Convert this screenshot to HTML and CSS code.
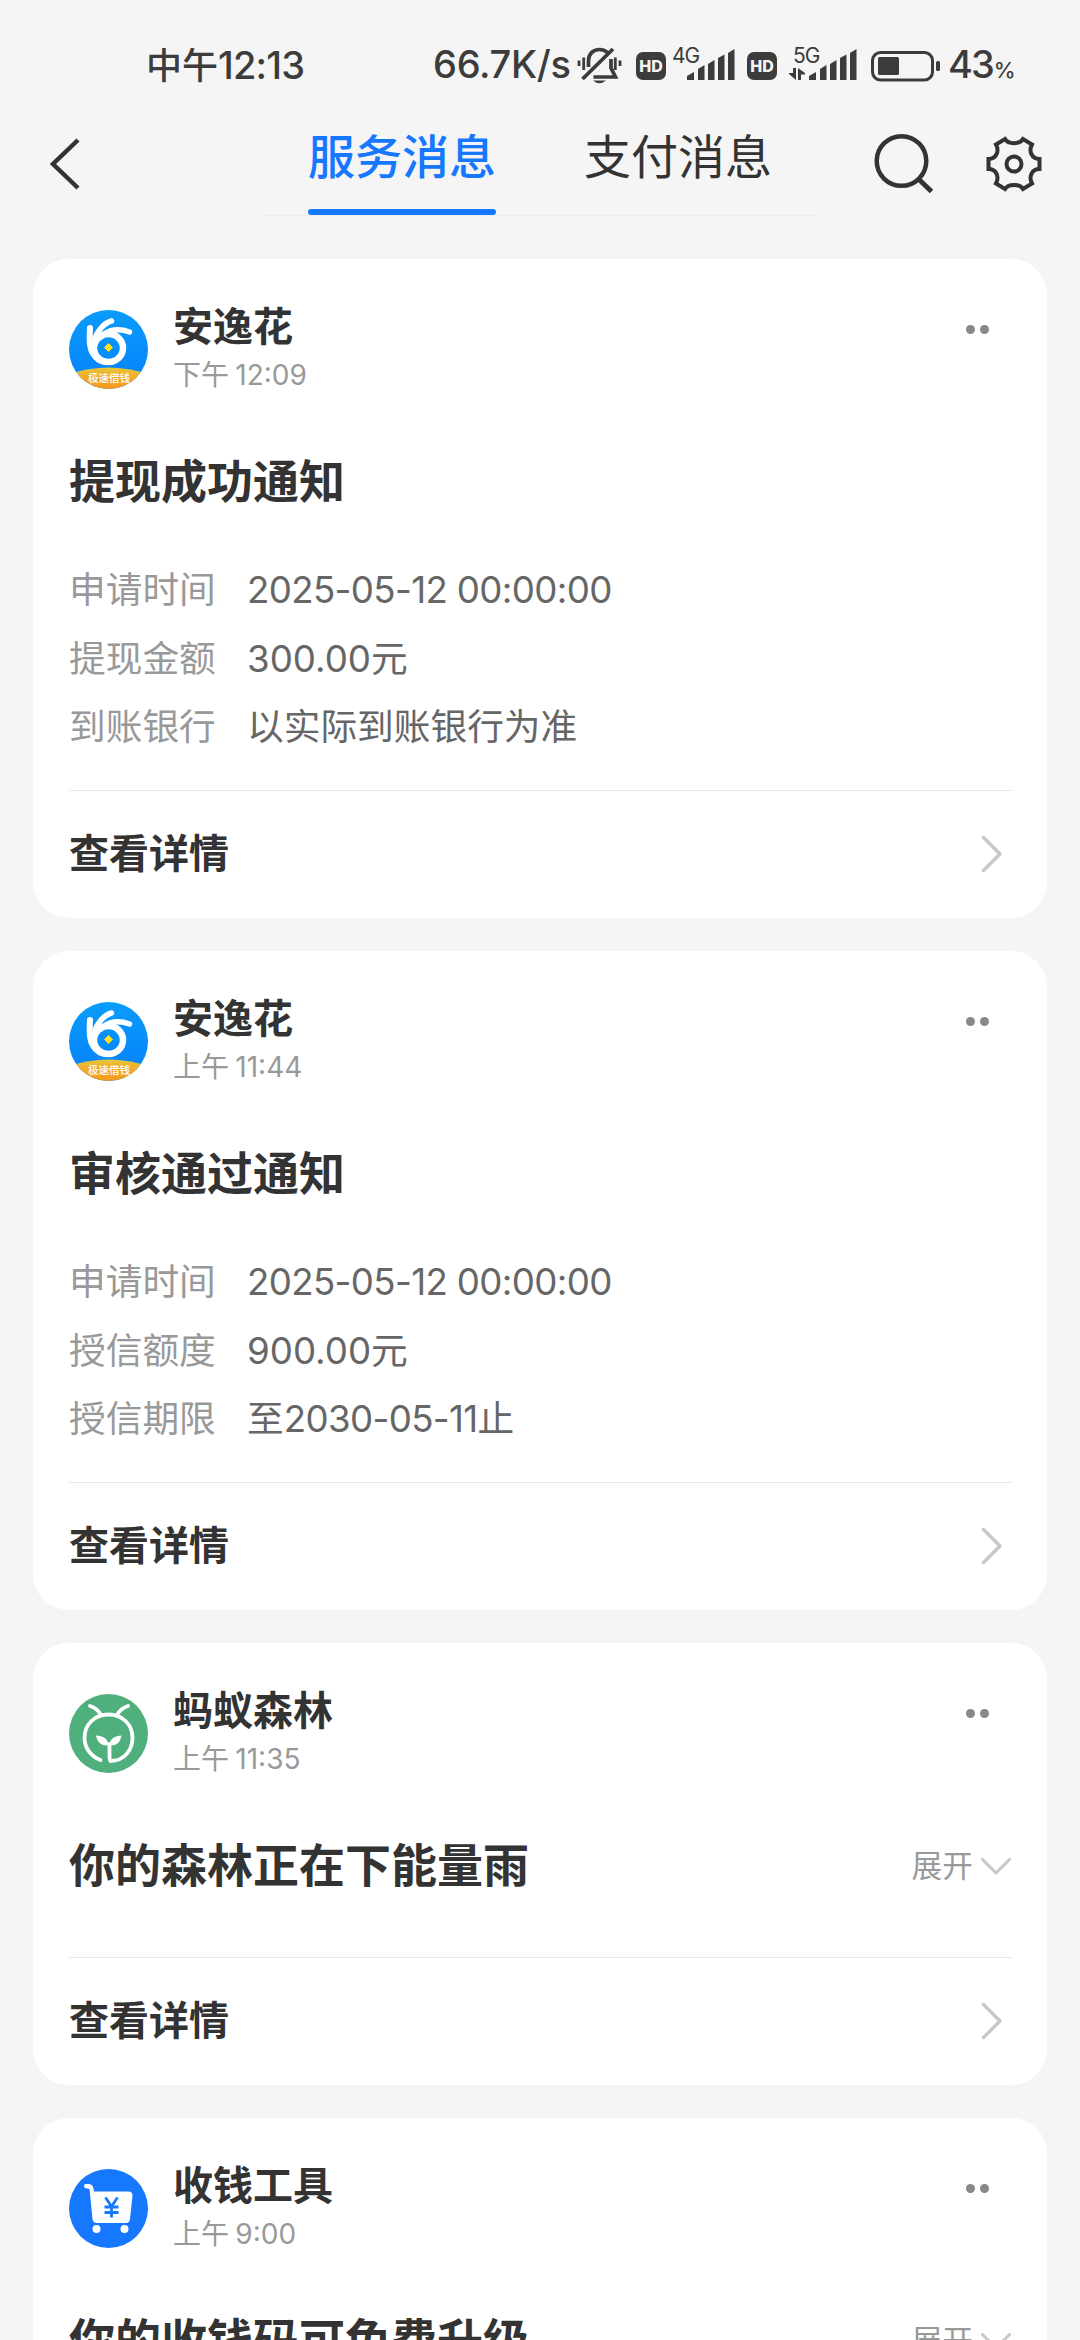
FILE: index.html
```html
<!DOCTYPE html>
<html lang="zh-CN">
<head>
<meta charset="utf-8">
<title>服务消息</title>
<link rel="stylesheet" href="styles.css">
</head>
<body>
<svg class="defs" aria-hidden="true">
  <defs>
    <linearGradient id="sky" x1="0" y1="0" x2="0" y2="1"><stop offset="0" stop-color="#0a9cfb"/><stop offset="1" stop-color="#0580fa"/></linearGradient>
    <linearGradient id="gold" x1="0" y1="0" x2="0" y2="1"><stop offset="0" stop-color="#e6c83c"/><stop offset=".35" stop-color="#f0b02c"/><stop offset="1" stop-color="#f5981c"/></linearGradient>
    <clipPath id="disc"><circle cx="39.5" cy="39.5" r="39.5"/></clipPath>
    <symbol id="logo-flower" viewBox="0 0 79 79">
      <g clip-path="url(#disc)">
        <rect width="79" height="79" fill="url(#sky)"/>
        <path d="M0 64Q39.500 51 79 64V79H0z" fill="url(#gold)"/>
        <g fill="none" stroke="#fff" stroke-linecap="round">
          <ellipse cx="39.500" cy="38" rx="14.500" ry="14" stroke-width="6.500"/>
          <path stroke-width="6" d="M21 18C20.500 28 20 37 24 43.500C27 49 32 52 39 52"/>
          <path stroke-width="5.500" d="M25 31C28 21 35 13 42.500 11M32 27C39 19 50 18 60.500 22"/>
        </g>
        <path fill="#ffe11a" stroke="#ffe11a" d="M39.500 33.500l4 4-4 4-4-4z"/>
      </g>
    </symbol>
    <symbol id="chevron" viewBox="0 0 22 38"><path d="M3.500 2.500L20 19L3.500 35.500" fill="none" stroke="#c8c8c8" stroke-width="3.500" stroke-linecap="round" stroke-linejoin="round"/></symbol>
    <symbol id="down" viewBox="0 0 32 20"><path d="M1.500 1.500L16 16L30.500 1.500" fill="none" stroke="#c8c8c8" stroke-width="3"/></symbol>
    <symbol id="bars" viewBox="0 0 48 32"><path d="M0 31V27L7 23V31zM11 31V20L17.500 16V31zM21 31V15L27.500 11V31zM31 31V9L37.500 5.500V31zM41 31V4L47.500 0V31z" fill="#3c3c3c"/></symbol>
  </defs>
</svg>
<header class="status">
  <span class="clock">中午<span class="num">12:13</span></span>
  <span class="speed num">66.7K/s</span>
  <svg class="bell" viewBox="0 0 46 40" fill="none" stroke="#3c3c3c" stroke-width="3.500">
    <path d="M11.500 21V15C11.500 8 16 3.500 22.500 3.500C26 3.500 29 5 31 7M34 13V22L38.500 31H16.500" stroke-width="3.700"/>
    <path d="M5.500 33L36 3" stroke-width="3.800"/>
    <path d="M2 14.500V20M6.700 11.500V24M38.300 11.500V24M43 14.500V20" stroke-width="2.800"/>
    <path d="M16 34.500H29Q22.500 40 16 34.500z" fill="#3c3c3c" stroke="none"/>
  </svg>
  <span class="hd">HD</span>
  <span class="signal"><span class="gen">4G</span><svg class="bars"><use href="#bars"/></svg></span>
  <span class="hd second">HD</span>
  <span class="signal wide"><span class="gen">5G</span><svg class="updown" viewBox="0 0 16 12" fill="#3c3c3c"><path d="M4 0H7V12L0 6V5H4zM9 12V0L16 5V6.500H12V12z"/></svg><svg class="bars"><use href="#bars"/></svg></span>
  <svg class="battery" viewBox="0 0 70 31"><rect x="1.500" y="1.500" width="60" height="27.500" rx="8" fill="none" stroke="#3c3c3c" stroke-width="3"/><rect x="7" y="6" width="21" height="18" rx="1.500" fill="#3c3c3c"/><rect x="65" y="10" width="4" height="10" rx="1.500" fill="#3c3c3c"/></svg>
  <span class="percent num">43<small>%</small></span>
</header>
<nav class="nav">
  <svg class="back" viewBox="0 0 34 54"><path d="M30 3L5 27L30 51" fill="none" stroke="#333" stroke-width="4.500"/></svg>
  <div class="tabs">
    <div class="tab active"><span>服务消息</span></div>
    <div class="tab"><span>支付消息</span></div>
  </div>
  <svg class="search" viewBox="0 0 60 62" fill="none" stroke="#333" stroke-width="4.500"><circle cx="27.500" cy="28" r="24.800"/><path d="M44.500 46L57.500 58.500" stroke-width="5"/></svg>
  <svg class="gear" viewBox="0 0 56 56" fill="none" stroke="#333" stroke-width="4"><circle cx="28" cy="28" r="7.500"/><path d="M19 3C22 8.500 34 8.500 37 3L46 8.500C42.500 15 45.500 23 53.500 23V33C45.500 33 42.500 41 46 47.500L37 53C34 47.500 22 47.500 19 53L10 47.500C13.500 41 10.500 33 2.500 33V23C10.500 23 13.500 15 10 8.500z"/></svg>
</nav>
<main class="feed">
  <article class="card">
    <div class="head">
      <svg class="avatar"><use href="#logo-flower"/></svg><span class="ribbon">极速借钱</span>
      <div class="who"><h2>安逸花</h2><p>下午 <span class="num">12:09</span></p></div>
      <span class="more"><i></i><i></i></span>
    </div>
    <div class="title"><h3>提现成功通知</h3></div>
    <dl class="fields">
      <dt>申请时间</dt><dd><span class="num date">2025-05-12 00:00:00</span></dd>
      <dt>提现金额</dt><dd><span class="num">300.00</span>元</dd>
      <dt>到账银行</dt><dd>以实际到账银行为准</dd>
    </dl>
    <div class="foot"><span>查看详情</span><svg class="chevron"><use href="#chevron"/></svg></div>
  </article>
  <article class="card">
    <div class="head">
      <svg class="avatar"><use href="#logo-flower"/></svg><span class="ribbon">极速借钱</span>
      <div class="who"><h2>安逸花</h2><p>上午 <span class="num">11:44</span></p></div>
      <span class="more"><i></i><i></i></span>
    </div>
    <div class="title"><h3>审核通过通知</h3></div>
    <dl class="fields">
      <dt>申请时间</dt><dd><span class="num date">2025-05-12 00:00:00</span></dd>
      <dt>授信额度</dt><dd><span class="num">900.00</span>元</dd>
      <dt>授信期限</dt><dd>至<span class="num date">2030-05-11</span>止</dd>
    </dl>
    <div class="foot"><span>查看详情</span><svg class="chevron"><use href="#chevron"/></svg></div>
  </article>
  <article class="card">
    <div class="head">
      <svg class="avatar" viewBox="0 0 79 79"><circle cx="39.500" cy="39.500" r="39.500" fill="#4fb07d"/><g fill="none" stroke="#fff" stroke-width="3.800" stroke-linecap="round"><path d="M21 12Q28 14 32 21M59 12Q52 14 48 21"/><path d="M31.500 66C21 62 15.500 53 15.500 44C15.500 30 26 20.500 39.500 20.500C53 20.500 63.500 30 63.500 44C63.500 55 56 67 41.500 67Q40.500 67 40.500 62V50"/></g><path fill="#fff" d="M39.500 51.500C31 52 28 47 27 41.500C34 42 39 44 39.500 51.500zM40.500 51.500C49 52 51.500 47 52.500 41.500C46 42 41 44 40.500 51.500z"/></svg>
      <div class="who"><h2>蚂蚁森林</h2><p>上午 <span class="num">11:35</span></p></div>
      <span class="more"><i></i><i></i></span>
    </div>
    <div class="title"><h3>你的森林正在下能量雨</h3><span class="expand"><span>展开</span><svg><use href="#down"/></svg></span></div>
    <div class="foot"><span>查看详情</span><svg class="chevron"><use href="#chevron"/></svg></div>
  </article>
  <article class="card">
    <div class="head">
      <svg class="avatar" viewBox="0 0 79 79"><circle cx="39.500" cy="39.500" r="39.500" fill="#1677ff"/><path fill="#fff" d="M16 15H20Q24 15.500 24.500 20L25 22.500H60Q64 23 63.500 27L61 50Q60.500 54 57 54H28Q24 54 23.500 50L20.500 20L16 19Q14 17 16 15z"/><circle cx="27.500" cy="60" r="4" fill="#fff"/><circle cx="55.500" cy="60" r="4" fill="#fff"/><path d="M36.500 28.500L42.500 37.500L48.500 28.500M42.500 37V48.500M35.500 38H49.500M35.500 43.500H49.500" fill="none" stroke="#1677ff" stroke-width="2.800"/></svg>
      <div class="who"><h2>收钱工具</h2><p>上午 <span class="num">9:00</span></p></div>
      <span class="more"><i></i><i></i></span>
    </div>
    <div class="title"><h3>你的收钱码可免费升级</h3><span class="expand"><span>展开</span><svg><use href="#down"/></svg></span></div>
  </article>
</main>
</body>
</html>
```
FILE: styles.css
```css
* { box-sizing: border-box; margin: 0; padding: 0; }
body {
  width: 1080px;
  height: 2340px;
  overflow: hidden;
  background: #f5f5f5;
  color: #333;
  font-family: "Noto Sans CJK SC", sans-serif;
}
svg { display: block; flex: none; }
.defs { position: absolute; width: 0; height: 0; }
.num { font-family: Inter, "Noto Sans CJK SC", sans-serif; }

.status {
  display: flex;
  align-items: center;
  height: 128px;
  padding-left: 146px;
  color: #3c3c3c;
  font-size: 36px;
  font-weight: 500;
  white-space: nowrap;
}
.clock { width: 287px; margin-top: -3px; }
.clock .num, .speed { font-size: 38px; letter-spacing: -0.8px; }
.speed { width: 144px; letter-spacing: -0.3px; }
.bell { width: 46px; height: 40px; margin-top: 3px; }
.hd {
  width: 30px;
  height: 28px;
  margin-left: 13px;
  margin-top: 4px;
  border-radius: 7px;
  background: #3c3c3c;
  color: #f5f5f5;
  font: 800 16px/28px Inter, sans-serif;
  text-align: center;
}
.hd.second { margin-left: 12px; }
.signal {
  display: grid;
  grid-template-columns: 15px 48px;
  width: 63px;
  height: 34px;
  margin-left: 6px;
  align-items: end;
}
.signal.wide { grid-template-columns: 20px 48px; width: 68px; margin-left: 12px; }
.bars { grid-column: 2; grid-row: 1; width: 48px; height: 32px; }
.gen { grid-column: 1; grid-row: 1; align-self: start; font: 400 21px/17px Inter, sans-serif; letter-spacing: -1px; }
.wide .gen { padding-left: 4px; }
.updown { grid-column: 1; grid-row: 1; width: 16px; height: 12px; margin-bottom: 1px; }
.battery { width: 70px; height: 31px; margin-left: 14px; margin-top: 4px; }
.percent { margin-left: 7px; font-size: 38px; letter-spacing: -2px; }
.percent small { margin-left: 1px; font-size: 22px; }

.nav { display: flex; height: 88px; padding-left: 48px; }
.back { width: 34px; height: 54px; margin-top: 9px; }
.tabs { display: flex; width: 552px; margin-left: 182px; border-bottom: 1px solid #eee; }
.tab { display: flex; justify-content: center; width: 276px; }
.tab span { height: 87px; font-size: 47px; line-height: 52px; }
.active span { color: #1677ff; font-weight: 500; }
.active span::after { content: ""; display: block; height: 6px; margin-top: 29px; border-radius: 3px; background: #1677ff; }
.search { width: 60px; height: 62px; margin: 5px 0 0 58px; }
.gear { width: 56px; height: 56px; margin: 8px 0 0 52px; }

.feed { display: flex; flex-direction: column; gap: 33px; padding: 43px 33px 0; }
.card { padding: 0 35px 0 36px; border-radius: 36px; background: #fff; }
.head { display: flex; position: relative; height: 179px; padding-top: 51px; }
.avatar { width: 79px; height: 79px; }
.ribbon { position: absolute; left: 19px; top: 111px; width: 42px; color: #fff; font-size: 10.500px; line-height: 15px; font-weight: 500; white-space: nowrap; }
.who { flex: 1; margin-left: 25px; margin-top: -14px; }
.who h2 { font-size: 40px; line-height: 56px; font-weight: 700; }
.who p { margin-top: 2px; color: #999; font-size: 28px; line-height: 38px; }
.more { display: flex; gap: 5px; margin: 15px 23px 0 0; }
.more i { width: 9px; height: 9px; border-radius: 50%; background: #888; }
.title { display: flex; align-items: center; justify-content: space-between; height: 86px; }
.title h3 { height: 86px; font-size: 46px; line-height: 80px; font-weight: 700; }
.expand { display: flex; align-items: center; color: #999; font-size: 30.700px; }
.expand span { margin-top: -3px; }
.expand svg { width: 32px; height: 20px; margin-left: 7px; margin-top: 4px; }
.fields { display: grid; grid-template-columns: 178px 1fr; grid-auto-rows: 68.500px; height: 218px; padding-top: 29px; font-size: 36.700px; line-height: 68.500px; }
.fields dt { color: #999; }
.fields dd { color: #666; }
.date { letter-spacing: -0.65px; }
.foot { display: flex; align-items: center; justify-content: space-between; height: 128px; padding: 0 10px 2px 0; border-top: 1px solid #e9e9e9; font-size: 40px; font-weight: 700; }
.foot span { margin-top: -5px; }
.title + .foot { margin-top: 49px; }
.fields + .foot { margin-top: 48px; }
.chevron { width: 22px; height: 38px; }
```
